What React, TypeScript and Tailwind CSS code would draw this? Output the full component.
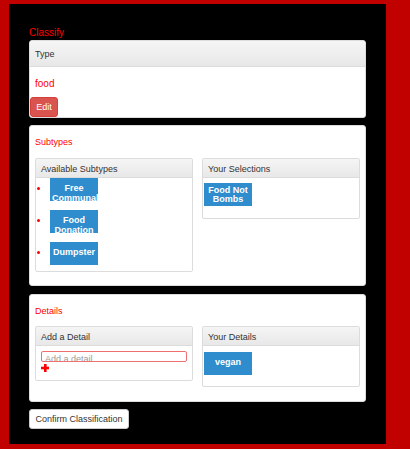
import React from "react";

const font = { fontFamily: '"Liberation Sans", Arial, sans-serif' };

function BlueBtn({ children, tight }: { children: React.ReactNode; tight?: boolean }) {
  return (
    <div
      className={
        tight
          ? "w-[48px] h-[23px] overflow-hidden bg-[#2f8dcd] text-white font-bold text-[9px] leading-[9px] text-center pt-[3px] px-[2px]"
          : "w-[48px] h-[23px] overflow-hidden bg-[#2f8dcd] text-white font-bold text-[9px] leading-[10px] text-center pt-[5px] px-[2px]"
      }
    >
      {children}
    </div>
  );
}

function InnerPanel({ title, children }: { title: string; children: React.ReactNode }) {
  return (
    <div className="w-[158px] border border-[#dcdcdc] rounded-[2px] bg-white self-start">
      <div className="h-[19px] border-b border-[#dcdcdc] bg-gradient-to-b from-[#f5f5f5] to-[#e8e8e8] text-[9px] leading-[20px] text-[#333] pl-[5px]">
        {title}
      </div>
      {children}
    </div>
  );
}

function Item({ label }: { label: string }) {
  return (
    <div className="flex items-start">
      <div className="w-[3px] h-[3px] rounded-full bg-[#f00] mt-[9px] ml-[1px] mr-[10px]" />
      <BlueBtn>{label}</BlueBtn>
    </div>
  );
}

export default function App() {
  return (
    <div className="w-[410px] h-[449px] bg-[#c10000] pt-[4px] pl-[9px]" style={font}>
      <div className="w-[377px] h-[440px] bg-black pt-[23px] px-[20px]">
        <div className="text-[10px] leading-[12px] text-[#f00] mb-[1px]">Classify</div>

        <div className="h-[78px] bg-white border border-[#dcdcdc] rounded-[3px] overflow-hidden">
          <div className="h-[26px] border-b border-[#dcdcdc] bg-gradient-to-b from-[#f5f5f5] to-[#e8e8e8] text-[9px] leading-[27px] text-[#333] pl-[5px]">
            Type
          </div>
          <div className="pt-[11px]">
            <div className="text-[10px] leading-[12px] text-[#f00] pl-[5px]">food</div>
            <div className="mt-[7px] w-[28px] h-[20px] bg-[#d9534f] border border-[#d43f3a] rounded-[3px] text-white text-[9px] leading-[18px] text-center">
              Edit
            </div>
          </div>
        </div>

        <div className="mt-[7px] h-[161px] bg-white border border-[#dcdcdc] rounded-[3px] px-[5px] pt-[10px]">
          <div className="text-[9px] leading-[12px] text-[#f00] mb-[10px]">Subtypes</div>
          <div className="flex gap-[9px]">
            <InnerPanel title="Available Subtypes">
              <div className="flex flex-col gap-[9px] pb-[6px]">
                <Item label="Free Communal" />
                <Item label="Food Donation" />
                <Item label="Dumpster" />
              </div>
            </InnerPanel>
            <InnerPanel title="Your Selections">
              <div className="pt-[5px] pb-[12px] pl-[1px]">
                <BlueBtn tight>Food Not Bombs</BlueBtn>
              </div>
            </InnerPanel>
          </div>
        </div>

        <div className="mt-[8px] h-[108px] bg-white border border-[#dcdcdc] rounded-[3px] px-[5px] pt-[10px]">
          <div className="text-[9px] leading-[12px] text-[#f00] mb-[9px]">Details</div>
          <div className="flex gap-[9px]">
            <InnerPanel title="Add a Detail">
              <div className="h-[34px] pt-[5px] px-[5px]">
                <input
                  className="block w-[146px] h-[11px] border border-[#f07070] rounded-[2px] text-[9px] leading-[9px] px-[3px] pt-[4px] outline-none placeholder:text-[#999]"
                  placeholder="Add a detail"
                />
                <svg width="8" height="8" viewBox="0 0 8 8" className="mt-[2px] ml-[0px]">
                  <rect x="3" y="0" width="2.6" height="8" fill="#f00" />
                  <rect x="0" y="2.7" width="8" height="2.6" fill="#f00" />
                </svg>
              </div>
            </InnerPanel>
            <InnerPanel title="Your Details">
              <div className="pt-[6px] pb-[11px] pl-[1px]">
                <BlueBtn>vegan</BlueBtn>
              </div>
            </InnerPanel>
          </div>
        </div>

        <div className="mt-[7px] w-[100px] h-[20px] bg-white border border-[#ccc] rounded-[3px] text-[9px] leading-[18px] text-[#333] text-center">
          Confirm Classification
        </div>
      </div>
    </div>
  );
}
